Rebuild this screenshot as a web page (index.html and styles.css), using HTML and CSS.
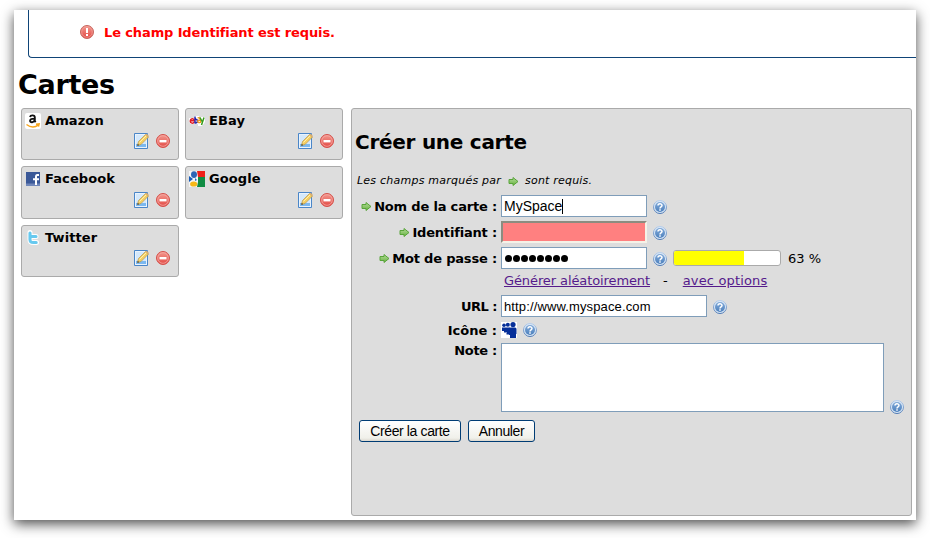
FILE: index.html
```html
<!DOCTYPE html>
<html lang="fr">
<head>
<meta charset="utf-8">
<title>Cartes</title>
<link rel="stylesheet" href="styles.css">
</head>
<body>
<svg class="defs" width="0" height="0" aria-hidden="true">
  <defs>
    <linearGradient id="red" x1="0" y1="0" x2="0" y2="1"><stop offset="0" stop-color="#f39a90"/><stop offset="1" stop-color="#e24843"/></linearGradient>
    <linearGradient id="blue" x1="0" y1="0" x2="0" y2="1"><stop offset="0" stop-color="#83abd9"/><stop offset="1" stop-color="#4c80bd"/></linearGradient>
    <linearGradient id="ring" x1="0" y1="0" x2="0" y2="1"><stop offset="0" stop-color="#b5cdec"/><stop offset="1" stop-color="#4c78b4"/></linearGradient>
    <linearGradient id="green" x1="0" y1="0" x2="0" y2="1"><stop offset="0" stop-color="#b5dc9b"/><stop offset="1" stop-color="#67b23f"/></linearGradient>
  </defs>
  <symbol id="remove" viewBox="0 0 14 14"><circle cx="7" cy="7" r="6.5" fill="url(#red)" stroke="#d4504a"/><circle cx="7" cy="7" r="5.3" fill="none" stroke="#f4aaa4" stroke-width=".8"/><path d="M3.5 6h7v2.400h-7z" fill="#fff"/></symbol>
  <symbol id="error" viewBox="0 0 14 14"><circle cx="7" cy="7" r="6.5" fill="url(#red)" stroke="#c5675f"/><circle cx="7" cy="7" r="5.3" fill="none" stroke="#f4aaa4" stroke-width=".6"/><path d="M6 3h2v5H6zM6 9h2v2H6z" fill="#fff"/></symbol>
  <symbol id="help" viewBox="0 0 14 14"><circle cx="7" cy="7" r="6.500" fill="#dbe8f6" stroke="url(#ring)"/><circle cx="7" cy="7" r="5" fill="url(#blue)"/><path d="M5 5.600C5 3.300 9 3.300 9 5.500 9 6.900 7 6.800 7 8.400M7 9.300v1.500" fill="none" stroke="#fff" stroke-width="1.500"/></symbol>
  <symbol id="arrow" viewBox="0 0 10 9"><path d="M.5 2.500h4v-2L9.500 4.500l-5 4v-2h-4z" fill="url(#green)" stroke="#58a43a"/></symbol>
  <symbol id="edit" viewBox="0 0 16 16"><path d="M1.500.5h13v15h-13z" fill="#e9f3fd" stroke="#4a86c8"/><path d="M3 2h10v12H3z" fill="#d4e8fb"/><path d="M3 11h10v3H3z" fill="#7bb8f0"/><path d="M4.500 12.500l1-4 7-7 3 2.500-7.500 7.500z" fill="#f5cf62" stroke="#b8954d" stroke-width=".7"/><path d="M6.500 9.500l7-7" stroke="#fff0ad"/><path d="M4.300 12.800l.5-2 1.400 1.400z" fill="#333"/><path d="M12.300 1.700l2.700 2.500 1-1.300L13.700.8z" fill="#d9ad70"/></symbol>
  <symbol id="amazon" viewBox="0 0 16 16"><rect width="16" height="16" rx="2" fill="#fff"/><path d="M5 3.900c.5-2 4.800-2.100 4.800.5v3.800l.9 1M9.300 5.600c-2.600 0-4.200.5-4.200 2.200 0 2.200 3.800 1.800 4.500-.5" fill="none" stroke="#111" stroke-width="1.900"/><path d="M1.500 11.500c4 3 8.500 3 12 .4M11 11.200l3.200-.3-.7 2.700" fill="none" stroke="#f7a51c" stroke-width="1.400"/></symbol>
  <symbol id="ebay" viewBox="0 0 16 16"><path d="M0 5h5V3h5v1h6v5l-3 4H9v-2H1z" fill="#fff"/><path d="M1.300 7.700h3.800C4.800 4.800 1.300 5.500 1.300 8s3 2.800 3.900 1" fill="none" stroke="#e31b23" stroke-width="1.500"/><path d="M6 3.500v7M6 6.500c3-1.200 3.500 4 0 3.500" fill="none" stroke="#2421a8" stroke-width="1.500"/><path d="M8.500 5c3-1 3 1 3 5M11 7c-3 0-3 3 0 2.500" fill="none" stroke="#f19a21" stroke-width="1.300"/><path d="M11 4.500l2 4M15 4.500L12.500 12" fill="none" stroke="#369c1c" stroke-width="1.500"/></symbol>
  <symbol id="facebook" viewBox="0 0 16 16"><path d="M1 1h14v14H1z" fill="#3b5998"/><path d="M1 12.500h14V15H1z" fill="#7087ba"/><path d="M14 4h-1.700C11 4 11 5 11 6v8M8 8.200h6" fill="none" stroke="#fff" stroke-width="2"/></symbol>
  <symbol id="google" viewBox="0 0 16 16"><path d="M0 0h16v16H0z" fill="#f5f5f5"/><path d="M8 0h8v6H9z" fill="#ef2019"/><path d="M9 6h7v10H8l1-5z" fill="#108c43"/><path d="M0 5l4 3-4 3z" fill="#175bb8"/><ellipse cx="5" cy="3.600" rx="3" ry="3.400" fill="#2d65b4"/><path d="M6 7l2 2-2 1z" fill="#276aba"/><ellipse cx="4.700" cy="13" rx="3.600" ry="2.600" fill="#f8b817"/></symbol>
  <symbol id="twitter" viewBox="0 0 16 16"><path d="M5 2.500v7c0 2.400 1 3 3.500 3H11.500M5 6.500h6" fill="none" stroke="#fff" stroke-width="5" stroke-linecap="round" stroke-linejoin="round"/><path d="M5 3v6.500c0 2.400 1 3 3.500 3h2.700M5 6.500h6" fill="none" stroke="#67c9ef" stroke-width="3.100" stroke-linecap="round" stroke-linejoin="round"/></symbol>
  <symbol id="myspace" viewBox="0 0 16 16"><path d="M0 0h16v16H0z" fill="#fff"/><g fill="#062f99"><circle cx="3" cy="3.300" r="1.800"/><circle cx="6.800" cy="2.800" r="2"/><circle cx="12" cy="2.600" r="2.600"/><path d="M1 5.500h4v5H3V9H1zM4.500 5.500H9v7H5.500V10h-1zM8 7q0-1.500 1.500-1.500H14q1.500 0 1.500 1.500v5H15v4H9v-3H8z"/></g></symbol>
</svg>
<div class="window">
  <div class="alert"><svg class="i14"><use href="#error"/></svg><span>Le champ Identifiant est requis.</span></div>
  <h1>Cartes</h1>
  <div class="columns">
    <div class="cards">
      <div class="card"><div class="name"><svg class="i16"><use href="#amazon"/></svg><span>Amazon</span></div><div class="tools"><svg class="i16"><use href="#edit"/></svg><svg class="i14"><use href="#remove"/></svg></div></div>
      <div class="card"><div class="name"><svg class="i16"><use href="#ebay"/></svg><span>EBay</span></div><div class="tools"><svg class="i16"><use href="#edit"/></svg><svg class="i14"><use href="#remove"/></svg></div></div>
      <div class="card tall"><div class="name"><svg class="i16"><use href="#facebook"/></svg><span>Facebook</span></div><div class="tools"><svg class="i16"><use href="#edit"/></svg><svg class="i14"><use href="#remove"/></svg></div></div>
      <div class="card tall"><div class="name"><svg class="i16"><use href="#google"/></svg><span>Google</span></div><div class="tools"><svg class="i16"><use href="#edit"/></svg><svg class="i14"><use href="#remove"/></svg></div></div>
      <div class="card"><div class="name"><svg class="i16"><use href="#twitter"/></svg><span>Twitter</span></div><div class="tools"><svg class="i16"><use href="#edit"/></svg><svg class="i14"><use href="#remove"/></svg></div></div>
    </div>
    <div class="panel">
      <h2>Créer une carte</h2>
      <p class="hint"><span class="hint-a">Les champs marqués par</span><svg class="arrow"><use href="#arrow"/></svg><span class="hint-b">sont requis.</span></p>
      <div class="form">
        <div class="label"><svg class="arrow"><use href="#arrow"/></svg><span>Nom de la carte :</span></div>
        <div class="field"><div class="input"><span class="t-my">MySpace</span><i class="caret"></i></div><svg class="i14 help"><use href="#help"/></svg></div>
        <div class="label"><svg class="arrow"><use href="#arrow"/></svg><span>Identifiant :</span></div>
        <div class="field"><div class="input invalid"></div><svg class="i14 help"><use href="#help"/></svg></div>
        <div class="label"><svg class="arrow"><use href="#arrow"/></svg><span>Mot de passe :</span></div>
        <div class="field"><div class="input dots"><i></i><i></i><i></i><i></i><i></i><i></i><i></i><i></i></div><svg class="i14 help"><use href="#help"/></svg><div class="meter"><div class="fill"></div></div><span class="percent">63 %</span></div>
        <div></div>
        <div class="links"><a class="gen">Générer aléatoirement</a><span class="dash">-</span><a class="opt">avec options</a></div>
        <div class="label"><span class="l-url">URL :</span></div>
        <div class="field"><div class="input wide"><span class="t-url">http://www.myspace.com</span></div><svg class="i14 help"><use href="#help"/></svg></div>
        <div class="label"><span class="l-ico">Icône :</span></div>
        <div class="field"><svg class="i16"><use href="#myspace"/></svg><svg class="i14 icon-help"><use href="#help"/></svg></div>
        <div class="label top"><span class="l-note">Note :</span></div>
        <div class="field note"><div class="textarea"></div><svg class="i14"><use href="#help"/></svg></div>
      </div>
      <div class="buttons"><div class="button create"><span>Créer la carte</span></div><div class="button cancel"><span>Annuler</span></div></div>
    </div>
  </div>
</div>
</body>
</html>
```
FILE: styles.css
```css
* { box-sizing: border-box; }
body { margin: 0; padding: 10px 14px 18px; height: 538px; overflow: hidden; background: #fff; color: #000; font: 13px/16px "DejaVu Sans", sans-serif; }
svg, span, i { display: block; flex: none; }
span, a { white-space: nowrap; }
.defs { position: absolute; }
.window { width: 902px; height: 510px; background: #fff; box-shadow: 0 4px 12px rgba(0,0,0,.7); display: flow-root; }
.i14 { width: 14px; height: 14px; }
.i16 { width: 16px; height: 16px; }
.arrow { width: 11px; height: 9px; flex: none; }
.alert { height: 48px; margin-left: 14px; border: solid #0f4477; border-width: 0 0 1px 1px; border-radius: 0 0 0 4px; padding: 15px 0 0 51px; display: flex; gap: 10px; color: #f00; font-weight: bold; }
.alert span { letter-spacing: -.12px; }
h1 { margin: 9px 0 0 4px; height: 41px; font-size: 27px; line-height: 36px; letter-spacing: -.3px; }
.columns { display: flex; gap: 8px; padding-left: 7px; }
.cards { display: grid; grid-template-columns: 158px 158px; gap: 6px; align-content: start; width: 322px; }
.card { height: 52px; border: 1px solid #aaa; border-radius: 3px; background: #ddd; padding: 4px 8px 0 3px; }
.tall { height: 53px; }
.name { display: flex; gap: 4px; font-weight: bold; letter-spacing: .1px; }
.tools { display: flex; justify-content: flex-end; align-items: center; gap: 7px; margin-top: 4px; }
.tall .tools { margin-top: 5px; }
.panel { width: 561px; height: 408px; border: 1px solid #aaa; border-radius: 3px; background: #ddd; }
h2 { margin: 19px 0 0 3px; height: 28px; font-size: 20px; line-height: 28px; letter-spacing: -.27px; }
.hint { margin: 16px 0 0 5px; height: 21px; display: flex; font-size: 11px; line-height: 18px; font-style: italic; }
.hint-a { letter-spacing: .23px; }
.hint-b { letter-spacing: .2px; }
.hint .arrow { margin: 5px 6px 0 7px; }
.form { display: grid; grid-template-columns: 145px 1fr; column-gap: 4px; grid-template-rows: 26px 26px 26px 22px 26px 22px 73px; }
.label { display: flex; align-items: center; justify-content: flex-end; gap: 2px; font-weight: bold; padding-top: 2px; letter-spacing: -.18px; }
.label .arrow { margin-top: -1px; }
.label.top { align-items: flex-start; }
.l-url { letter-spacing: -.5px; }
.l-ico { letter-spacing: 0; }
.l-note { letter-spacing: -.3px; }
.field { display: flex; align-items: center; }
.input { width: 146px; height: 22px; border: 1px solid #7f9db9; background: #fff; padding: 0 2px; display: flex; align-items: center; font-family: "Liberation Sans", sans-serif; font-size: 14px; }
.invalid { background: #ff8080; border: 2px solid; border-color: #8d8c80 #f5f2e7 #f5f2e7 #8d8c80; }
.caret { width: 1px; height: 15px; background: #000; }
.wide { width: 206px; }
.t-url { font-size: 13px; letter-spacing: .13px; padding-top: 1px; }
.dots { gap: 1px; padding-left: 3px; }
.dots i { width: 7px; height: 7px; border-radius: 4px; background: #000; margin-top: 1px; }
.help { margin: 2px 0 0 6px; }
.icon-help { margin-left: 6px; }
.meter { width: 108px; height: 16px; border: 1px solid #aaa; border-radius: 3px; background: #fff; margin-left: 6px; overflow: hidden; }
.fill { width: 70px; height: 100%; background: #ff0; }
.percent { margin: 1px 0 0 7px; }
.links { display: flex; padding: 2px 0 0 3px; }
.links a { color: #551a8b; text-decoration: underline; }
.gen { letter-spacing: -.1px; }
.opt { letter-spacing: .15px; }
.dash { margin: 0 15px 0 13px; }
.note { align-items: flex-end; padding-bottom: 2px; gap: 6px; }
.textarea { width: 383px; height: 69px; border: 1px solid #7f9db9; background: #fff; }
.note svg { margin-bottom: -2px; }
.buttons { display: flex; gap: 7px; padding: 6px 0 0 7px; }
.button { height: 22px; border: 1px solid #003c74; border-radius: 3px; background: linear-gradient(#fff, #f0f0ea 85%, #dcd8cf); font: 14px/21px "Liberation Sans", sans-serif; display: flex; justify-content: center; letter-spacing: -.38px; }
.create { width: 102px; }
.cancel { width: 67px; }
```
